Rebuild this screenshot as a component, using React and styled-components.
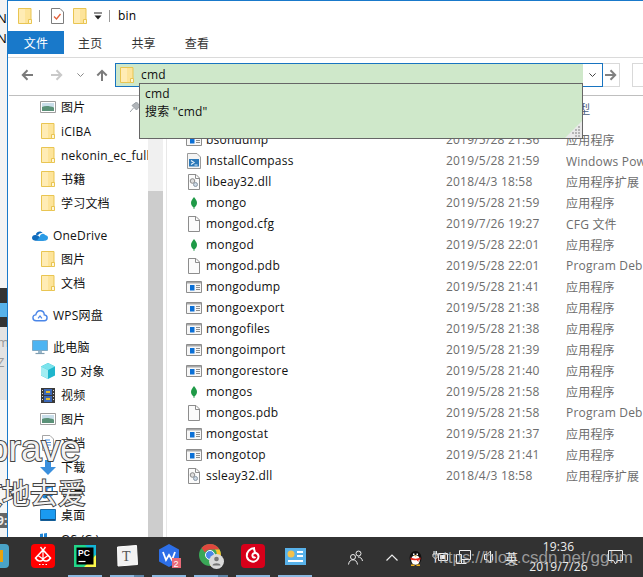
import styled, { createGlobalStyle } from "styled-components";

const UI_FONT = `"Open Sans", "Noto Sans CJK SC", sans-serif`;

const GlobalStyle = createGlobalStyle`
  html, body {
    margin: 0;
    padding: 0;
    background: #fff;
  }
  * {
    box-sizing: border-box;
  }
`;

const FolderIcon = () => (
  <svg width="14" height="16" viewBox="0 0 14 16">
    <path d="M.5.5h12.5v15H.5z" fill="#fde49a" stroke="#e9c552" />
    <path d="M1 1h6v14H1z" fill="#fff0c0" opacity=".7" />
    <path d="M10.5 11.5h3v4h-3z" fill="#fff6d8" stroke="#e9c552" />
  </svg>
);

const AppIcon = () => (
  <svg width="16" height="12" viewBox="0 0 16 12">
    <path d="M.5.5h15v11H.5z" fill="#f7f7f7" stroke="#8d8d8d" />
    <path d="M1 1h14v1.5H1z" fill="#a8a8a8" />
    <path d="M4 4h4.5v5.5H4z" fill="#0a6fd6" />
    <path d="M10 4.500h4M10 6.500h4M10 8.500h4" stroke="#8d8d8d" />
  </svg>
);

const LeafIcon = () => (
  <svg width="6" height="12" viewBox="0 0 6 12">
    <path d="M3 0C5 2.500 6 4 6 6c0 2-1.500 3.500-2.600 4.500V12h-.8v-1.500C1.500 9.500 0 8 0 6c0-2 1-3.500 3-6z" fill="#1f9a47" />
  </svg>
);

const BlankFileIcon = () => (
  <svg width="12" height="16" viewBox="0 0 12 16">
    <path d="M.5.5H8L11.500 4v11.500H.5z" fill="#fbfbfb" stroke="#8d8d8d" />
    <path d="M7.500.5V4.500h4" fill="none" stroke="#8d8d8d" />
  </svg>
);

const DllIcon = () => (
  <svg width="12" height="16" viewBox="0 0 12 16">
    <path d="M.5.5H8L11.500 4v11.500H.5z" fill="#fbfbfb" stroke="#8d8d8d" />
    <path d="M7.500.5V4.500h4" fill="none" stroke="#8d8d8d" />
    <circle cx="4.500" cy="7" r="2.300" fill="#dcdcdc" stroke="#8a8a8a" />
    <circle cx="7.500" cy="10.500" r="2" fill="#c9d6e2" stroke="#8a97a5" />
  </svg>
);

const ScriptIcon = () => (
  <svg width="14" height="16" viewBox="0 0 14 16">
    <path d="M.5.5H10L13.500 4v11.500H.5z" fill="#f4f4f4" stroke="#9a9a9a" />
    <path d="M2 6h10v7.500H2z" fill="#2b78b8" />
    <path d="M4 7.500l3 2-3 2M7.500 12h3" fill="none" stroke="#e6f2fb" strokeWidth="1.200" />
  </svg>
);

const PictureIcon = () => (
  <svg width="16" height="12" viewBox="0 0 16 12">
    <path d="M.5.5h15v11H.5z" fill="#fff" stroke="#9d9d9d" />
    <path d="M2 2h12v4H2z" fill="#c9deea" />
    <path d="M2 6c3-1.500 7-1.500 12 .5V10H2z" fill="#5a9178" />
  </svg>
);

const OneDriveIcon = () => (
  <svg width="17" height="11" viewBox="0 0 17 11">
    <path d="M4 4.500C5 1 9.500 0 11.500 3c-3-.5-4.500 1-5 2.500C5.500 5 4.800 4.800 4 4.500z" fill="#0f6cbd" />
    <path d="M3.500 11C1 11 0 9.500 0 8c0-2 2-3.500 4-3 2 .5 3 1 4 2l5 4z" fill="#0f6cbd" />
    <path d="M5 11l3-4c1-3 4-4.500 6-2 2 .5 3 1.500 3 3s-1 3-3 3z" fill="#2a9be6" />
  </svg>
);

const WpsCloudIcon = () => (
  <svg width="17" height="13" viewBox="0 0 17 13">
    <path d="M4.500 12C2 12 1 10.300 1 8.800 1 7 2.500 5.700 4 5.800 4.700 2.800 7 1 9.500 1.500 12 2 13 4 13 5.800c2 .2 3 1.500 3 3S15 12 13 12z" fill="none" stroke="#4a86e8" strokeWidth="1.500" />
    <path d="M6.500 9.500l2-2.500 2 2.500" fill="none" stroke="#4a86e8" strokeWidth="1.300" />
  </svg>
);

const MonitorIcon = () => (
  <svg width="16" height="15" viewBox="0 0 16 15">
    <path d="M.5.5h15v10H.5z" fill="#4db4f2" stroke="#7fa9c4" />
    <path d="M6 11h4v2H6z" fill="#9bb8cb" />
    <path d="M3.500 13.500h9" stroke="#7f9db0" strokeWidth="1.200" />
  </svg>
);

const CubeIcon = () => (
  <svg width="16" height="16" viewBox="0 0 16 16">
    <path d="M8 0l7 3.500v9L8 16l-7-3.500v-9z" fill="#1fb6cc" />
    <path d="M8 0l7 3.500L8 7 1 3.500z" fill="#7be3ec" />
    <path d="M1 3.500L8 7v9l-7-3.500z" fill="#a2edf2" />
  </svg>
);

const FilmIcon = () => (
  <svg width="14" height="15" viewBox="0 0 14 15">
    <path d="M0 0h14v15H0z" fill="#3a3a3a" />
    <path d="M3 1h8v6H3z" fill="#3c68b8" />
    <path d="M3 8h8v6H3z" fill="#3c68b8" />
    <path d="M5 3h4v2H5zM5 10h4v2H5z" fill="#e0b92e" />
    <path d="M1 2h1v1H1zM1 5h1v1H1zM1 8h1v1H1zM1 11h1v1H1zM12 2h1v1h-1zM12 5h1v1h-1zM12 8h1v1h-1zM12 11h1v1h-1z" fill="#ddd" />
  </svg>
);

const DocIcon = () => (
  <svg width="12" height="16" viewBox="0 0 12 16">
    <path d="M.5.5H8L11.500 4v11.500H.5z" fill="#fff" stroke="#a5a5a5" />
    <path d="M3 5h5M3 7.500h6M3 10h6M3 12.500h4" stroke="#4d93dc" />
  </svg>
);

const DownloadIcon = () => (
  <svg width="16" height="15" viewBox="0 0 16 15">
    <path d="M5 0h6v7h5l-8 8-8-8h5z" fill="#3a8fdd" />
  </svg>
);

const MusicIcon = () => (
  <svg width="14" height="15" viewBox="0 0 14 15">
    <path d="M5 2l7-2v10.500a2.500 2 0 1 1-1.500-1.800V3.500L6.500 4.700V12.500a2.500 2 0 1 1-1.500-1.800z" fill="#1f86d8" />
  </svg>
);

const DesktopIcon = () => (
  <svg width="16" height="12" viewBox="0 0 16 12">
    <path d="M.5.5h15v11H.5z" fill="#1a9af0" stroke="#1a6ca8" />
    <path d="M1 10h14v1.500H1z" fill="#0f4e84" />
  </svg>
);

const DriveIcon = () => (
  <svg width="16" height="12" viewBox="0 0 16 12">
    <path d="M0 1l3-.5V4H0zM4 .4l3-.4v4H4z" fill="#1f86d8" />
  </svg>
);

const SmallChevron = ({ color }) => (
  <svg width="7" height="4" viewBox="0 0 7 4">
    <path d="M.4.4l3.100 3.100L6.600.4" fill="none" stroke={color} />
  </svg>
);

const BackArrow = () => (
  <svg width="12" height="12" viewBox="0 0 12 12">
    <path d="M12 6H2M6.500 1.300L1.800 6l4.700 4.700" fill="none" stroke="#7b7b7b" strokeWidth="2" />
  </svg>
);

const ForwardArrow = ({ color }) => (
  <svg width="12" height="12" viewBox="0 0 12 12">
    <path d="M0 6h10M5.500 1.300L10.200 6l-4.700 4.700" fill="none" stroke={color} strokeWidth="2" />
  </svg>
);

const UpArrow = () => (
  <svg width="12" height="12" viewBox="0 0 12 12">
    <path d="M6 12V2M1.300 6.500L6 1.800l4.700 4.700" fill="none" stroke="#7b7b7b" strokeWidth="2" />
  </svg>
);

const PinIcon = () => (
  <svg width="10" height="10" viewBox="0 0 10 10">
    <path d="M0 10l3.500-4M2 3.500L6.500 0 10 4 6.500 8z" fill="#b0b4b8" stroke="#9aa0a6" />
  </svg>
);

const ChecklistIcon = () => (
  <svg width="13" height="16" viewBox="0 0 13 16">
    <path d="M.5.5H9L12.500 4v11.500H.5z" fill="#fff" stroke="#7d7d7d" />
    <path d="M3 8.500l2.500 2.500L9.500 6" fill="none" stroke="#e2603a" strokeWidth="1.300" />
  </svg>
);

const DropArrow = () => (
  <svg width="8" height="8" viewBox="0 0 8 8">
    <path d="M0 1h8" stroke="#222" />
    <path d="M.5 3.500h7L4 7.500z" fill="#222" />
  </svg>
);

const RedMothIcon = () => (
  <svg width="24" height="24" viewBox="0 0 24 24">
    <rect width="24" height="24" rx="4" fill="#f00" />
    <path d="M9.500 3L12 6.500 14.500 3" fill="none" stroke="#fff" strokeWidth="1.300" />
    <path d="M12 6L4.500 14c2 3.500 5.500 4 7.500 1.500 2 2.500 5.500 2 7.500-1.500z" fill="none" stroke="#fff" strokeWidth="1.600" />
    <path d="M12 6.500v9M7 11.500l5 3.500 5-3.500" fill="none" stroke="#fff" strokeWidth="1.200" />
    <path d="M8 20.500h1.500M11.200 20.500h1.600M14.500 20.500H16" stroke="#fff" strokeWidth="1.200" />
  </svg>
);

const PyCharmIcon = () => (
  <svg width="22" height="22" viewBox="0 0 22 22">
    <path d="M0 0h22v22H0z" fill="#21d789" />
    <path d="M11 0h11v12z" fill="#12b5d6" />
    <path d="M22 10v12H10z" fill="#fcf84a" />
    <path d="M2.500 2.500h17v17h-17z" fill="#000" />
    <text x="4" y="11" fontFamily="Liberation Sans, sans-serif" fontWeight="700" fontSize="8.500" fill="#fff">PC</text>
    <path d="M4.500 16.500h7" stroke="#fff" strokeWidth="1.200" />
  </svg>
);

const TyporaIcon = () => (
  <svg width="22" height="22" viewBox="0 0 22 22">
    <path d="M1.500 2L20.500 .5 21.500 19.500 2 21z" fill="#f2f2f2" stroke="#fff" />
    <text x="6" y="16" fontFamily="Liberation Serif, serif" fontSize="14" fill="#555">T</text>
  </svg>
);

const WpsIcon = () => (
  <svg width="23" height="24" viewBox="0 0 23 24">
    <path d="M11 0l10 5.500v12L11 23 1 17.500v-12z" fill="#2d6fe8" />
    <path d="M5 8l3 8 3-5 3 5 3-8" fill="none" stroke="#fff" strokeWidth="1.800" />
    <path d="M14 14h9v10h-9z" fill="#ea6a78" />
    <text x="15.500" y="22.500" fontFamily="Liberation Sans, sans-serif" fontSize="9" fill="#fff">2</text>
  </svg>
);

const ChromeIcon = () => (
  <svg width="25" height="25" viewBox="0 0 25 25">
    <circle cx="11" cy="11" r="11" fill="#3aa757" />
    <path d="M11 0a11 11 0 0 1 9.500 5.500H11a5.500 5.500 0 0 0-5 3L2.500 4A11 11 0 0 1 11 0z" fill="#e0483e" />
    <path d="M20.500 5.500A11 11 0 0 1 11 22l5-8.500a5.500 5.500 0 0 0 0-8z" fill="#fbc02d" />
    <circle cx="11" cy="11" r="4.500" fill="#4a86e8" stroke="#fff" />
    <circle cx="17.500" cy="17.500" r="7.500" fill="#dadada" />
    <circle cx="17.500" cy="15" r="2.300" fill="#777" />
    <path d="M13.500 21.500c0-3 8-3 8 0z" fill="#777" />
  </svg>
);

const NeteaseIcon = () => (
  <svg width="24" height="24" viewBox="0 0 24 24">
    <rect width="24" height="24" rx="4" fill="#d8001a" />
    <path d="M14 4C9 4 5 8 6 13c1 4 6 6 9.500 3.500 3-2 2.500-6.500-.5-7.500-2-.5-4 1-3.500 3 .3 1.500 2 2 3 1M13 5l1.500 5" fill="none" stroke="#fff" strokeWidth="2" />
  </svg>
);

const TileAppIcon = () => (
  <svg width="21" height="17" viewBox="0 0 21 17">
    <path d="M0 0h21v17H0z" fill="#58b2ea" />
    <circle cx="6" cy="6" r="3.500" fill="#f3c14b" />
    <path d="M12 3h6v2h-6zM12 7h6v2h-6zM3 12h15v2H3z" fill="#fff" />
  </svg>
);

const FirstTaskIcon = () => (
  <svg width="24" height="24" viewBox="0 0 24 24">
    <rect width="24" height="24" rx="4" fill="#4aa3c7" />
    <path d="M6 6h12v12H6z" fill="#e8a20c" />
    <path d="M9 9h6v6H9z" fill="#2f2f2f" />
  </svg>
);

const PeopleIcon = () => (
  <svg width="15" height="15" viewBox="0 0 15 15">
    <circle cx="10.500" cy="3.500" r="2.500" fill="none" stroke="#eee" />
    <circle cx="5" cy="7" r="2.500" fill="none" stroke="#eee" />
    <path d="M.5 14.500C1 11 3 9.800 5 9.800s4 1.200 4.500 4.700M10 7c2 0 4 1 4.500 4" fill="none" stroke="#eee" />
  </svg>
);

const UpChevronIcon = () => (
  <svg width="12" height="7" viewBox="0 0 12 7">
    <path d="M.5 6.500L6 1l5.500 5.500" fill="none" stroke="#eee" strokeWidth="1.200" />
  </svg>
);

const QqIcon = () => (
  <svg width="15" height="17" viewBox="0 0 15 17">
    <ellipse cx="7.500" cy="9" rx="6" ry="7" fill="#111" />
    <ellipse cx="7.500" cy="11" rx="4.300" ry="4.800" fill="#fff" />
    <path d="M2.500 8.500c3 1.500 7 1.500 10 0v2l-2 .5V13l-2-2c-2 .3-4 .3-6-.5z" fill="#e8261c" />
    <path d="M5 4.500h1.500v1.500H5zM8.500 4.500H10v1.500H8.500z" fill="#fff" />
    <path d="M6 6.500h3l-1.500 1.200z" fill="#f3b21a" />
    <path d="M3 15.500h3.500v1.500H3zM8.500 15.500H12v1.500H8.500z" fill="#f3b21a" />
  </svg>
);

const PowerIcon = () => (
  <svg width="16" height="12" viewBox="0 0 16 12">
    <path d="M2 0v3M4.500 0v3M1 3h5v2.500L3.500 8 1 5.500zM3.500 8v3" fill="none" stroke="#eee" />
    <path d="M6.500 2.500h9v7h-9z" fill="#323232" stroke="#eee" />
    <path d="M8 4h5v4H8z" fill="#eee" />
  </svg>
);

const NetworkIcon = () => (
  <svg width="15" height="15" viewBox="0 0 15 15">
    <path d="M3.500.5h11v9h-11z" fill="none" stroke="#eee" />
    <path d="M.5 4.500h5v9h-5z" fill="#333" stroke="#eee" />
    <path d="M8 10v3M5.500 13.500h5" stroke="#eee" />
  </svg>
);

const VolumeIcon = () => (
  <svg width="11" height="14" viewBox="0 0 11 14">
    <path d="M.5 4.500h2.500L6.500 1v12L3 9.500H.5z" fill="none" stroke="#eee" />
    <path d="M8.500 4v6" stroke="#eee" />
  </svg>
);

const NotifyIcon = () => (
  <svg width="15" height="15" viewBox="0 0 15 15">
    <path d="M.5.5h14v10H9.500L7.500 14l-2-3.500h-5z" fill="none" stroke="#eee" />
  </svg>
);

const GripIcon = () => (
  <svg width="17" height="17" viewBox="0 0 17 17">
    <path d="M17 0v17H0z" fill="#e9e9e9" />
    <path d="M13 5h2v2h-2zM10 8h2v2h-2zM13 8h2v2h-2zM7 11h2v2H7zM10 11h2v2h-2zM13 11h2v2h-2zM10 14h2v2h-2zM13 14h2v2h-2z" fill="#b5b5b5" />
  </svg>
);

const navSections = [
  [
    { icon: <PictureIcon />, label: "图片", pinned: true },
    { icon: <FolderIcon />, label: "iCIBA" },
    { icon: <FolderIcon />, label: "nekonin_ec_full" },
    { icon: <FolderIcon />, label: "书籍" },
    { icon: <FolderIcon />, label: "学习文档" },
  ],
  [
    { icon: <OneDriveIcon />, label: "OneDrive", top: true },
    { icon: <FolderIcon />, label: "图片" },
    { icon: <FolderIcon />, label: "文档" },
  ],
  [{ icon: <WpsCloudIcon />, label: "WPS网盘", top: true }],
  [
    { icon: <MonitorIcon />, label: "此电脑", top: true },
    { icon: <CubeIcon />, label: "3D 对象" },
    { icon: <FilmIcon />, label: "视频" },
    { icon: <PictureIcon />, label: "图片" },
    { icon: <DocIcon />, label: "文档" },
    { icon: <DownloadIcon />, label: "下载" },
    { icon: <MusicIcon />, label: "音乐" },
    { icon: <DesktopIcon />, label: "桌面" },
    { icon: <DriveIcon />, label: "OS (C:)" },
  ],
];

const APP = "应用程序";
const DLL = "应用程序扩展";

const files = [
  { icon: <AppIcon />, name: "bsondump", date: "2019/5/28 21:36", type: APP },
  { icon: <ScriptIcon />, name: "InstallCompass", date: "2019/5/28 21:59", type: "Windows PowerShell 脚本" },
  { icon: <DllIcon />, name: "libeay32.dll", date: "2018/4/3 18:58", type: DLL },
  { icon: <LeafIcon />, name: "mongo", date: "2019/5/28 21:59", type: APP },
  { icon: <BlankFileIcon />, name: "mongod.cfg", date: "2019/7/26 19:27", type: "CFG 文件" },
  { icon: <LeafIcon />, name: "mongod", date: "2019/5/28 22:01", type: APP },
  { icon: <BlankFileIcon />, name: "mongod.pdb", date: "2019/5/28 22:01", type: "Program Debug Database" },
  { icon: <AppIcon />, name: "mongodump", date: "2019/5/28 21:41", type: APP },
  { icon: <AppIcon />, name: "mongoexport", date: "2019/5/28 21:38", type: APP },
  { icon: <AppIcon />, name: "mongofiles", date: "2019/5/28 21:38", type: APP },
  { icon: <AppIcon />, name: "mongoimport", date: "2019/5/28 21:39", type: APP },
  { icon: <AppIcon />, name: "mongorestore", date: "2019/5/28 21:40", type: APP },
  { icon: <LeafIcon />, name: "mongos", date: "2019/5/28 21:58", type: APP },
  { icon: <BlankFileIcon />, name: "mongos.pdb", date: "2019/5/28 21:58", type: "Program Debug Database" },
  { icon: <AppIcon />, name: "mongostat", date: "2019/5/28 21:37", type: APP },
  { icon: <AppIcon />, name: "mongotop", date: "2019/5/28 21:41", type: APP },
  { icon: <DllIcon />, name: "ssleay32.dll", date: "2018/4/3 18:58", type: DLL },
];

const tasks = [
  { icon: <RedMothIcon /> },
  { icon: <PyCharmIcon />, open: true },
  { icon: <TyporaIcon />, open: true, stacked: true },
  { icon: <WpsIcon />, open: true },
  { icon: <ChromeIcon />, open: true, stacked: true },
  { icon: <NeteaseIcon />, open: true },
  { icon: <TileAppIcon />, open: true },
];

const App = () => {
  return (
    <Screen>
      <GlobalStyle />
      <Desktop>
        <BackdropStrip>
          <BackdropBand $h={288} $bg="#f3f3f3" $pad={8}>
            <StripLetter>N</StripLetter>
            <StripLetter>N</StripLetter>
          </BackdropBand>
          <BackdropBand $h={15} $bg="#333" />
          <BackdropBand $h={14} $bg="#58b2ea" />
          <BackdropBand $h={10} $bg="#333" />
          <BackdropBand $h={73} $bg="#e3e3e3" $pad={5}>
            <StripLetter $color="#999">m</StripLetter>
            <StripLetter $color="#999">Z</StripLetter>
          </BackdropBand>
          <BackdropBand $h={113} $bg="#f6f6f6" />
          <BackdropBand $h={15} $bg="#666">
            <StripClip>9:</StripClip>
          </BackdropBand>
          <BackdropBand $h={9} $bg="#f3f3f3" />
        </BackdropStrip>
        <Window>
          <TitleBar>
            <TitleItem $ml={0}>
              <FolderIcon />
            </TitleItem>
            <TitleDivider />
            <TitleItem $ml={11}>
              <ChecklistIcon />
            </TitleItem>
            <TitleItem $ml={9}>
              <FolderIcon />
            </TitleItem>
            <TitleItem $ml={7}>
              <DropArrow />
            </TitleItem>
            <TitleDivider />
            <TitleText>bin</TitleText>
          </TitleBar>
          <RibbonTabs>
            <FileTab>文件</FileTab>
            <RibbonTab>主页</RibbonTab>
            <RibbonTab>共享</RibbonTab>
            <RibbonTab>查看</RibbonTab>
          </RibbonTabs>
          <NavBar>
            <NavArrows>
              <BackArrow />
              <ForwardArrow color="#c9c9c9" />
              <SmallChevron color="#8a8a8a" />
              <UpArrow />
            </NavArrows>
            <AddressBar>
              <AddressFill>
                <FolderIcon />
                <AddressText>cmd</AddressText>
              </AddressFill>
              <AddressDrop>
                <SmallChevron color="#444" />
              </AddressDrop>
            </AddressBar>
            <GoButton>
              <ForwardArrow color="#808080" />
            </GoButton>
            <SearchBox />
          </NavBar>
          <Content>
            <Sidebar>
              {navSections.map((section, i) => (
                <NavSection key={i}>
                  {section.map((item, j) => (
                    <NavRow key={j} $top={item.top}>
                      <NavIcon>{item.icon}</NavIcon>
                      <span>{item.label}</span>
                      {item.pinned && (
                        <PinSlot>
                          <PinIcon />
                        </PinSlot>
                      )}
                    </NavRow>
                  ))}
                </NavSection>
              ))}
            </Sidebar>
            <ScrollTrack>
              <ScrollThumb />
            </ScrollTrack>
            <FileList>
              <HeaderRow>
                <span>名称</span>
                <span>修改日期</span>
                <span>类型</span>
              </HeaderRow>
              {files.map((file) => (
                <FileRow key={file.name}>
                  <FileName>
                    <FileIcon>{file.icon}</FileIcon>
                    {file.name}
                  </FileName>
                  <FileMeta>{file.date}</FileMeta>
                  <FileMeta>{file.type}</FileMeta>
                </FileRow>
              ))}
            </FileList>
          </Content>
        </Window>
      </Desktop>
      <Taskbar>
        <FirstTask>
          <FirstTaskIcon />
        </FirstTask>
        {tasks.map((task, i) => (
          <TaskButton key={i}>
            <TaskIcon>{task.icon}</TaskIcon>
            <TaskMark $open={task.open} $stacked={task.stacked} />
          </TaskButton>
        ))}
        <TrayItem $ml={32}>
          <PeopleIcon />
        </TrayItem>
        <TrayItem $ml={23}>
          <UpChevronIcon />
        </TrayItem>
        <TrayItem $ml={10}>
          <QqIcon />
        </TrayItem>
        <TrayItem $ml={9}>
          <PowerIcon />
        </TrayItem>
        <TrayItem $ml={8}>
          <NetworkIcon />
        </TrayItem>
        <TrayItem $ml={13}>
          <VolumeIcon />
        </TrayItem>
        <TrayLabel>英</TrayLabel>
        <Clock>
          <span>19:36</span>
          <span>2019/7/26</span>
        </Clock>
        <TrayItem $ml={20}>
          <NotifyIcon />
        </TrayItem>
      </Taskbar>

      <SuggestPopup>
        <div>cmd</div>
        <div>搜索 "cmd"</div>
        <Grip>
          <GripIcon />
        </Grip>
      </SuggestPopup>
      <CaptionLatin>brave</CaptionLatin>
      <CaptionCjk>敢地去爱</CaptionCjk>
      <Watermark>https://blog.csdn.net/gghm</Watermark>
    </Screen>
  );
};

const Screen = styled.div`
  position: relative;
  width: 643px;
  height: 577px;
  display: flex;
  flex-direction: column;
  overflow: hidden;
  font-family: ${UI_FONT};
  font-size: 12px;
  letter-spacing: 0.2px;
  color: #000;
  background: #fff;
`;

const Desktop = styled.div`
  height: 537px;
  display: flex;
  overflow: hidden;
`;

const BackdropStrip = styled.div`
  width: 7px;
  flex-shrink: 0;
  display: flex;
  flex-direction: column;
  overflow: hidden;
`;

const BackdropBand = styled.div`
  height: ${(p) => p.$h}px;
  flex-shrink: 0;
  background: ${(p) => p.$bg};
  padding-top: ${(p) => p.$pad || 0}px;
`;

const StripLetter = styled.div`
  height: 20px;
  line-height: 20px;
  font-size: 13px;
  margin-left: -3px;
  color: ${(p) => p.$color || "#000"};
`;

const StripClip = styled.div`
  line-height: 15px;
  font-size: 12px;
  font-weight: 700;
  color: #eee;
  white-space: nowrap;
  margin-left: -3px;
`;

const Window = styled.div`
  flex: 1;
  min-width: 0;
  display: flex;
  flex-direction: column;
  border-left: 1px solid #1979ca;
  border-top: 1px solid #1979ca;
`;

const TitleBar = styled.div`
  height: 30px;
  flex-shrink: 0;
  display: flex;
  align-items: center;
  padding-left: 10px;
`;

const TitleItem = styled.div`
  display: flex;
  margin-left: ${(p) => p.$ml}px;
`;

const TitleDivider = styled.div`
  width: 1px;
  height: 12px;
  margin-left: 7px;
  background: #999;
`;

const TitleText = styled.div`
  margin-left: 8px;
  margin-top: -2px;
`;

const RibbonTabs = styled.div`
  height: 27px;
  flex-shrink: 0;
  display: flex;
  align-items: flex-start;
  gap: 1px;
  border-bottom: 1px solid #dadada;
`;

const RibbonTab = styled.div`
  height: 23px;
  line-height: 25px;
  padding: 0 14px;
  color: #333;
`;

const FileTab = styled(RibbonTab)`
  width: 56px;
  margin-right: -1px;
  text-align: center;
  color: #fff;
  background: #1979ca;
`;

const NavBar = styled.div`
  height: 38px;
  flex-shrink: 0;
  display: flex;
  align-items: flex-start;
  padding-top: 5px;
  margin-left: 1px;
  border-bottom: 1px solid #bfbfbf;
`;

const NavArrows = styled.div`
  width: 106px;
  height: 23px;
  flex-shrink: 0;
  display: flex;
  align-items: center;
  padding-left: 12px;
  gap: 15px;
  svg:nth-child(2) {
    margin-left: 3px;
  }
  svg:nth-child(3) {
    margin-left: -1px;
  }
  svg:nth-child(4) {
    margin-left: -3px;
  }
`;

const AddressBar = styled.div`
  width: 488px;
  height: 24px;
  flex-shrink: 0;
  display: flex;
  border: 1px solid #1874c0;
`;

const AddressFill = styled.div`
  flex: 1;
  display: flex;
  align-items: center;
  gap: 7px;
  padding-left: 4px;
  background: #cfe8ca;
`;

const AddressText = styled.span`
  color: #111;
  margin-top: -2px;
`;

const AddressDrop = styled.div`
  width: 19px;
  display: flex;
  align-items: center;
  justify-content: center;
`;

const GoButton = styled.div`
  width: 17px;
  height: 24px;
  flex-shrink: 0;
  display: flex;
  align-items: center;
  justify-content: center;
  border: 1px solid #d9d9d9;
  border-left: 0;
`;

const SearchBox = styled.div`
  width: 40px;
  height: 24px;
  flex-shrink: 0;
  margin-left: 12px;
  border: 1px solid #d9d9d9;
`;

const Content = styled.div`
  flex: 1;
  min-height: 0;
  display: flex;
  overflow: hidden;
`;

const Sidebar = styled.div`
  width: 140px;
  flex-shrink: 0;
  margin-top: -1px;
  display: flex;
  flex-direction: column;
  gap: 8px;
`;

const NavSection = styled.div`
  display: flex;
  flex-direction: column;
`;

const NavRow = styled.div`
  height: 24px;
  flex-shrink: 0;
  display: flex;
  align-items: center;
  gap: 5px;
  white-space: nowrap;
  padding-left: ${(p) => (p.$top ? 24 : 32)}px;
  color: #111;
`;

const NavIcon = styled.span`
  width: 16px;
  height: 16px;
  flex-shrink: 0;
  display: flex;
  align-items: center;
  justify-content: center;
`;

const PinSlot = styled.span`
  margin-left: auto;
  padding-right: 8px;
  display: flex;
`;

const ScrollTrack = styled.div`
  width: 15px;
  flex-shrink: 0;
  padding-top: 95px;
  background: #f0f0f0;
`;

const ScrollThumb = styled.div`
  height: 100%;
  background: #cdcdcd;
`;

const FileList = styled.div`
  flex: 1;
  min-width: 0;
  margin-left: 3px;
  border-left: 1px solid #e8e8e8;
  padding-left: 19px;
  overflow: hidden;
`;

const columns = `
  display: grid;
  grid-template-columns: 260px 120px 1fr;
  white-space: nowrap;
`;

const HeaderRow = styled.div`
  ${columns}
  height: 33px;
  padding-top: 5px;
  line-height: 18px;
  color: #4c607a;
`;

const FileRow = styled.div`
  ${columns}
  height: 21px;
  align-items: center;
`;

const FileName = styled.div`
  display: flex;
  align-items: center;
  gap: 4px;
  color: #111;
`;

const FileIcon = styled.span`
  width: 16px;
  height: 16px;
  flex-shrink: 0;
  display: flex;
  align-items: center;
  justify-content: center;
`;

const FileMeta = styled.div`
  color: #6d6d6d;
  overflow: hidden;
`;

const Taskbar = styled.div`
  height: 40px;
  flex-shrink: 0;
  display: flex;
  align-items: center;
  background: #323232;
`;

const FirstTask = styled.div`
  width: 22px;
  height: 100%;
  flex-shrink: 0;
  display: flex;
  align-items: center;
  padding-bottom: 2px;
  overflow: hidden;
  svg {
    margin-left: -15px;
    flex-shrink: 0;
  }
`;

const TaskButton = styled.div`
  width: 42px;
  height: 100%;
  flex-shrink: 0;
  display: flex;
  flex-direction: column;
  align-items: center;
`;

const TaskIcon = styled.div`
  flex: 1;
  display: flex;
  align-items: center;
`;

const TaskMark = styled.div`
  width: 34px;
  height: 2px;
  background: ${(p) =>
    !p.$open
      ? "transparent"
      : p.$stacked
        ? "linear-gradient(90deg, #8bb8e0 72%, #5f86a8 72%)"
        : "#8bb8e0"};
`;

const TrayItem = styled.div`
  margin-left: ${(p) => p.$ml}px;
  flex-shrink: 0;
  display: flex;
  align-items: center;
`;

const TrayLabel = styled.div`
  margin-left: 10px;
  width: 14px;
  color: #eee;
  font-size: 13px;
  white-space: nowrap;
`;

const Clock = styled.div`
  width: 59px;
  margin-left: 10px;
  flex-shrink: 0;
  display: flex;
  flex-direction: column;
  align-items: center;
  color: #eee;
  line-height: 20px;
`;

const SuggestPopup = styled.div`
  position: absolute;
  left: 139px;
  top: 83px;
  width: 444px;
  height: 56px;
  padding: 1px 5px;
  line-height: 18px;
  color: #111;
  background: #cfe8ca;
  border: 1px solid #666;
`;

const Grip = styled.div`
  position: absolute;
  right: 0;
  bottom: 0;
  height: 17px;
`;

const CaptionLatin = styled.div`
  position: absolute;
  left: -12px;
  top: 428px;
  font-family: "Liberation Sans", sans-serif;
  font-size: 37px;
  line-height: 42px;
  letter-spacing: 0;
  color: #f2f2f2;
  -webkit-text-stroke: 2px #444;
  paint-order: stroke fill;
`;

const CaptionCjk = styled.div`
  position: absolute;
  left: -26px;
  top: 475px;
  font-family: "Noto Sans CJK SC", sans-serif;
  font-size: 28px;
  line-height: 34px;
  letter-spacing: 0;
  color: #f2f2f2;
  -webkit-text-stroke: 2px #444;
  paint-order: stroke fill;
`;

const Watermark = styled.div`
  position: absolute;
  right: 10px;
  top: 548px;
  font-family: "Liberation Sans", sans-serif;
  font-size: 17px;
  line-height: 20px;
  letter-spacing: 0;
  color: rgba(200, 200, 200, 0.7);
`;

export default App;
